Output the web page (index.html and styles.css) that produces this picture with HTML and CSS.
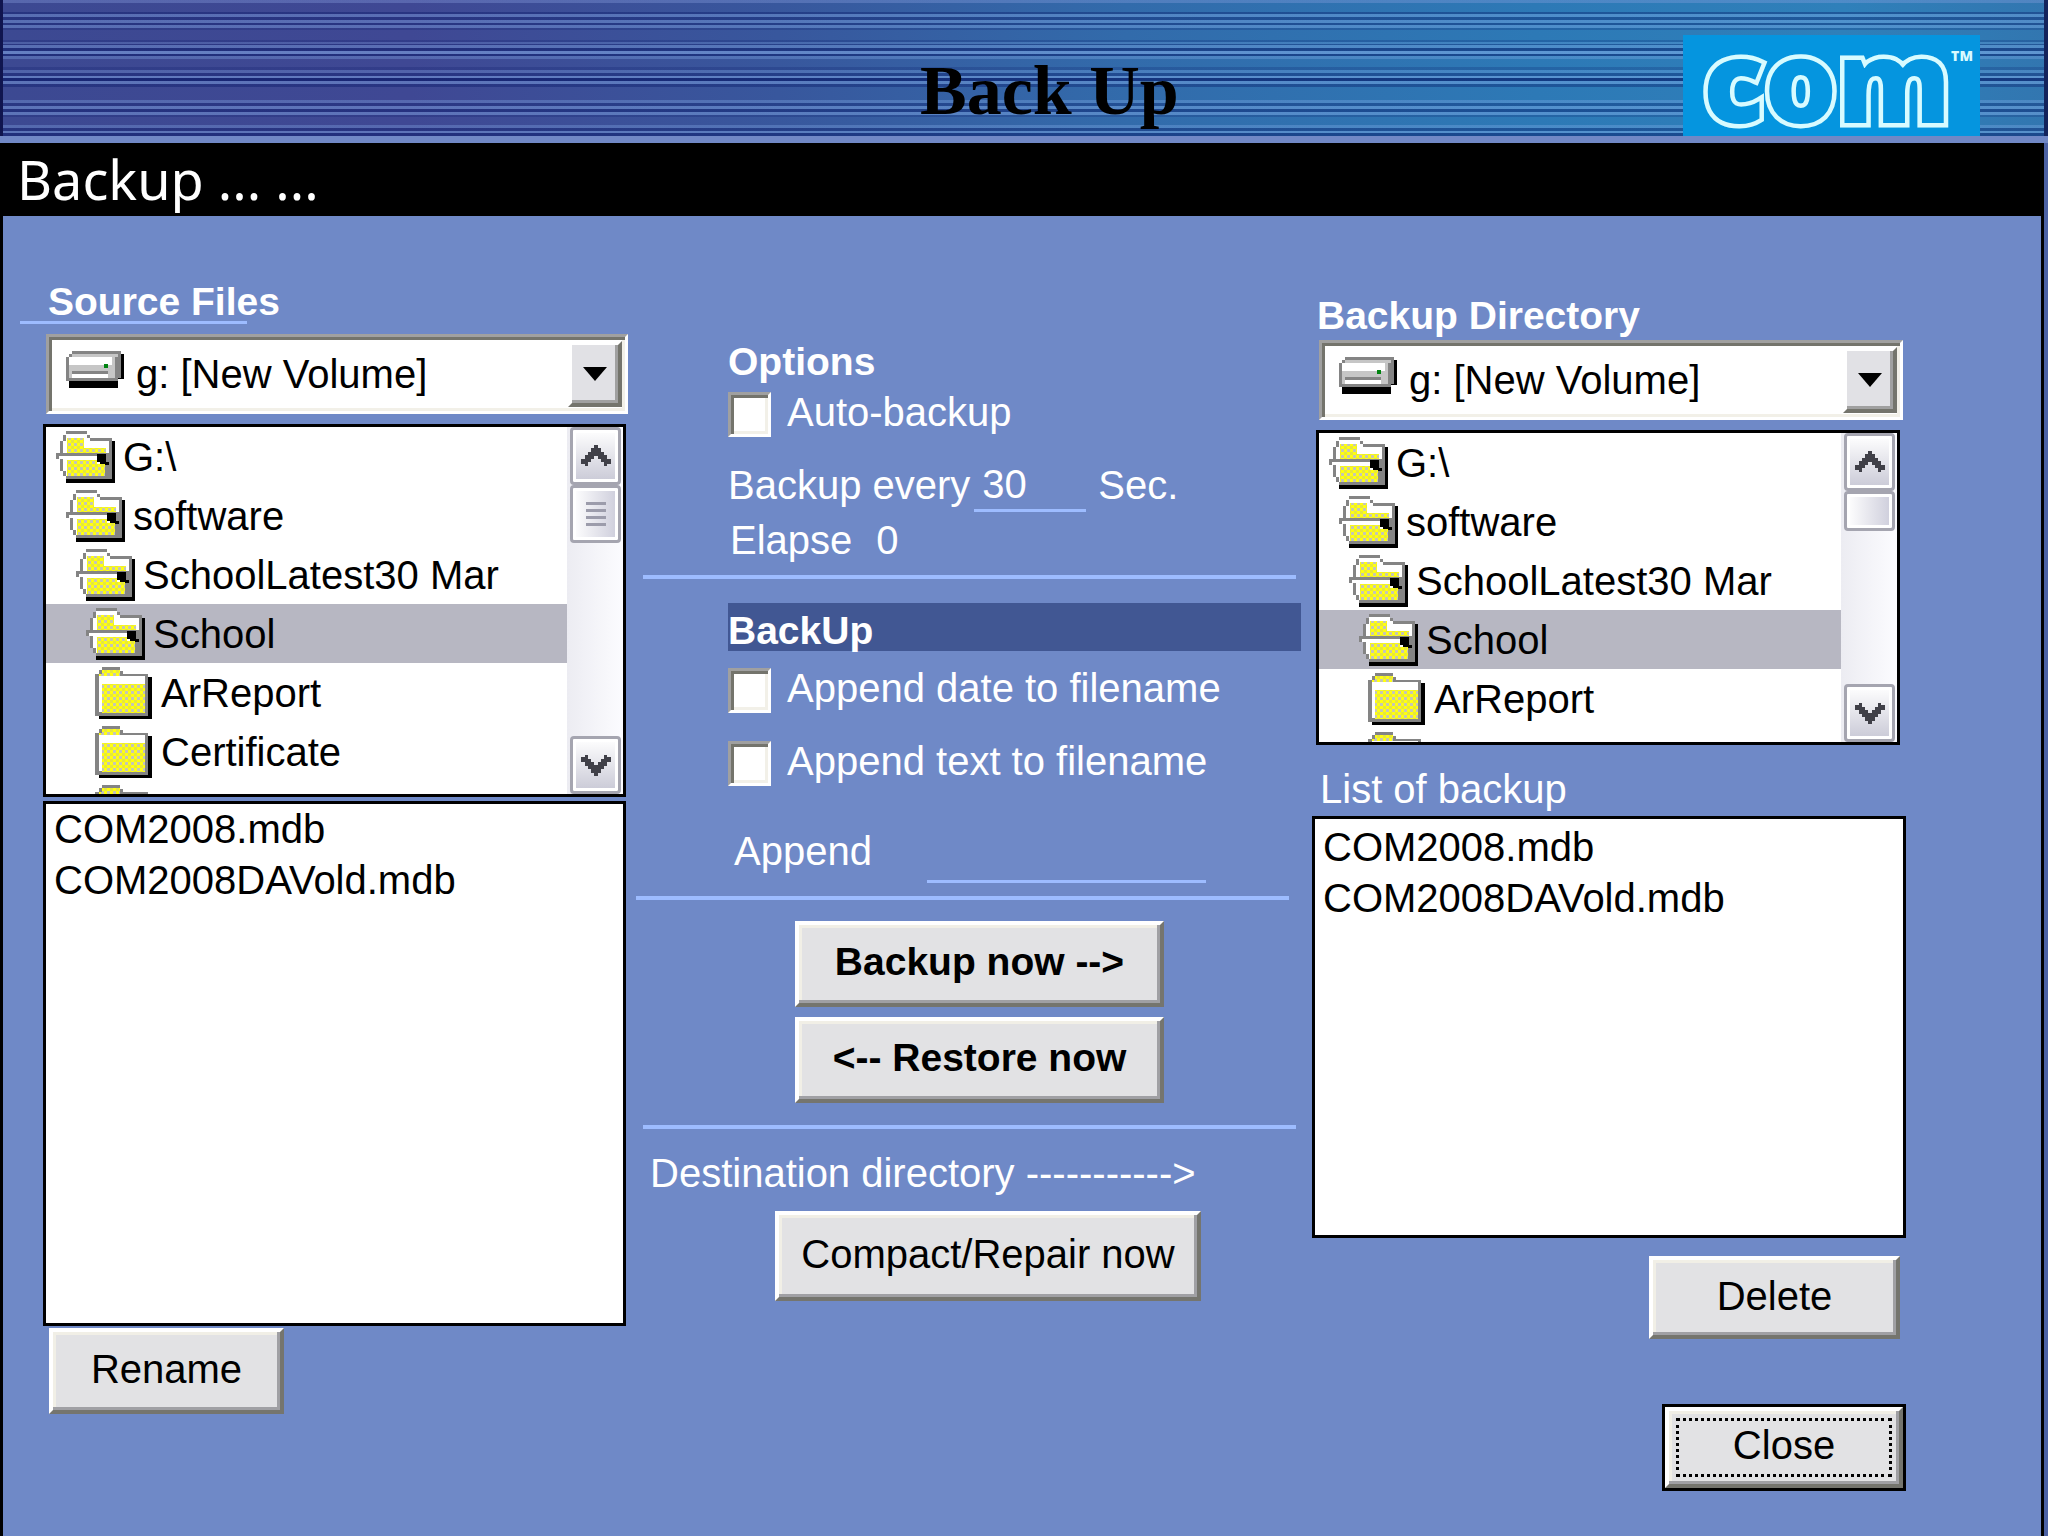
FILE: index.html
```html
<!DOCTYPE html>
<html lang="en">
<head>
    <meta charset="UTF-8">
    <meta name="viewport" content="width=device-width, initial-scale=1.0">
    <title>Back Up</title>
    <link rel="stylesheet" href="styles.css">
</head>
<body>
    <!-- Shared icons -->
    <svg class="sprite" aria-hidden="true">
        <defs>
            <pattern id="dots" width="6" height="6" patternUnits="userSpaceOnUse">
                <rect width="6" height="6" fill="#ffff10"/>
                <rect width="3" height="3" fill="#c6c6b4"/>
                <rect x="3" y="3" width="3" height="3" fill="#e6e640"/>
            </pattern>
            <symbol id="folder-open" viewBox="0 0 60 52">
                <path d="M10 48V52H59V10H56V48z" fill="#000"/>
                <path d="M10 0H31V4H34V7H56V48H10V45H7V40H4V28H0V22H4V10H7V4H10z" fill="#848484"/>
                <path d="M10 3H31V7H34V10H53V22H7V10H10z" fill="#fff"/>
                <path d="M11 7H28V17H50V22H11z" fill="url(#dots)"/>
                <path d="M3 25H41V28H47V45H10V40H7V28H3z" fill="#fff"/>
                <path d="M11 29H41V33H49V45H11z" fill="url(#dots)"/>
                <path d="M41 23H50V31H53V45H49V33H44V31H41z" fill="#000"/>
                <path d="M49 34H53V45H49z" fill="#848484"/>
            </symbol>
            <symbol id="folder" viewBox="0 0 57 52">
                <path d="M4 48V52H57V10H53V48z" fill="#000"/>
                <path d="M7 0H25V4H28V7H53V49H0V7H4V3H7z" fill="#848484"/>
                <path d="M7 3H25V9H50V45H4V8H7z" fill="#fff"/>
                <path d="M7 3H25V9H4V7H7z" fill="url(#dots)"/>
                <path d="M7 17H50V46H7z" fill="url(#dots)"/>
            </symbol>
            <symbol id="drive" viewBox="0 0 59 38">
                <path d="M3 30V37H52V28H58V3H55V26H50V30z" fill="#000"/>
                <path d="M6 0H55V27H52V30H0V6H3V3H6z" fill="#848484"/>
                <path d="M6 3H52V6H49V27H3V6H6z" fill="#c6c6c6"/>
                <path d="M3 6H46V14H3zM6 23H42V27H6z" fill="#fff"/>
                <path d="M6 20H42V23H6z" fill="#848484"/>
                <path d="M38 13H42V17H38z" fill="#008410"/>
            </symbol>
            <symbol id="chevron" viewBox="0 0 30 22">
                <path d="M13 0H17V3H20V7H23V10H26V14H30V19H26V21H23V17H20V14H17V11H13V14H10V17H7V21H4V19H0V14H4V10H7V7H10V3H13z" fill="#404048"/>
            </symbol>
        </defs>
    </svg>

    <div class="header">
        <h1>Back Up</h1>
        <div class="logo">com<sup>TM</sup></div>
    </div>

    <div class="window">
        <div class="title-bar">Backup ... ...</div>
        <div class="content">

            <div class="source">
                <h2 class="underlined">Source Files</h2>
                <div class="drive-box">
                    <svg class="drive-icon"><use href="#drive"/></svg>
                    <select aria-label="Source drive">
                        <option>g: [New Volume]</option>
                    </select>
                    <span class="arrow"></span>
                </div>
                <div class="folder-box tall">
                    <ul>
                        <li><svg class="open"><use href="#folder-open"/></svg>G:\</li>
                        <li class="level1"><svg class="open"><use href="#folder-open"/></svg>software</li>
                        <li class="level2"><svg class="open"><use href="#folder-open"/></svg>SchoolLatest30 Mar</li>
                        <li class="level3 selected"><svg class="open"><use href="#folder-open"/></svg>School</li>
                        <li class="level4"><svg class="closed"><use href="#folder"/></svg>ArReport</li>
                        <li class="level4"><svg class="closed"><use href="#folder"/></svg>Certificate</li>
                        <li class="level4"><svg class="closed"><use href="#folder"/></svg></li>
                    </ul>
                    <div class="scrollbar">
                        <button type="button" aria-label="Scroll up"><svg><use href="#chevron"/></svg></button>
                        <div class="thumb grip"><i></i><i></i><i></i><i></i></div>
                        <button type="button" class="down" aria-label="Scroll down"><svg><use href="#chevron"/></svg></button>
                    </div>
                </div>
                <select class="file-list source-list" size="8" aria-label="Source files">
                    <option>COM2008.mdb</option>
                    <option>COM2008DAVold.mdb</option>
                </select>
                <button type="button" class="btn rename">Rename</button>
            </div>

            <div class="options">
                <h2 class="indent">Options</h2>
                <label class="check indent auto"><input type="checkbox"> Auto-backup</label>
                <div class="every indent">
                    <label for="seconds">Backup every</label>
                    <input type="text" id="seconds" value="30">
                    <span>Sec.</span>
                </div>
                <div class="elapse indent"><span>Elapse</span><output>0</output></div>
                <hr>
                <h2 class="band">BackUp</h2>
                <label class="check indent date"><input type="checkbox"> Append date to filename</label>
                <label class="check indent text"><input type="checkbox"> Append text to filename</label>
                <div class="append indent">
                    <label for="append">Append</label>
                    <input type="text" id="append">
                </div>
                <hr class="shifted">
                <div class="actions">
                    <button type="button" class="btn bold">Backup now --&gt;</button>
                    <button type="button" class="btn bold">&lt;-- Restore now</button>
                </div>
                <hr class="last">
                <p class="destination">Destination directory -----------&gt;</p>
                <button type="button" class="btn compact">Compact/Repair now</button>
            </div>

            <div class="backup">
                <h2>Backup Directory</h2>
                <div class="drive-box">
                    <svg class="drive-icon"><use href="#drive"/></svg>
                    <select aria-label="Backup drive">
                        <option>g: [New Volume]</option>
                    </select>
                    <span class="arrow"></span>
                </div>
                <div class="folder-box short">
                    <ul>
                        <li><svg class="open"><use href="#folder-open"/></svg>G:\</li>
                        <li class="level1"><svg class="open"><use href="#folder-open"/></svg>software</li>
                        <li class="level2"><svg class="open"><use href="#folder-open"/></svg>SchoolLatest30 Mar</li>
                        <li class="level3 selected"><svg class="open"><use href="#folder-open"/></svg>School</li>
                        <li class="level4"><svg class="closed"><use href="#folder"/></svg>ArReport</li>
                        <li class="level4"><svg class="closed"><use href="#folder"/></svg></li>
                    </ul>
                    <div class="scrollbar">
                        <button type="button" aria-label="Scroll up"><svg><use href="#chevron"/></svg></button>
                        <div class="thumb small"></div>
                        <button type="button" class="down" aria-label="Scroll down"><svg><use href="#chevron"/></svg></button>
                    </div>
                </div>
                <label class="list-label" for="backups">List of backup</label>
                <select class="file-list backup-list" id="backups" size="8">
                    <option>COM2008.mdb</option>
                    <option>COM2008DAVold.mdb</option>
                </select>
                <button type="button" class="btn delete">Delete</button>
                <button type="button" class="btn close"><span>Close</span></button>
            </div>

        </div>
    </div>
</body>
</html>
```

FILE: styles.css
```css
* {
    box-sizing: border-box;
}
body {
    margin: 0;
    min-height: 100vh;
    display: flex;
    flex-direction: column;
    font-family: "Liberation Sans", Arial, sans-serif;
    font-size: 40px;
    line-height: 40px;
    background: #6f89c7;
    color: #fff;
}
h1, h2, p, ul {
    margin: 0;
    padding: 0;
}
input, select, button {
    font: inherit;
    color: inherit;
    border-radius: 0;
    margin: 0;
}
.sprite {
    position: absolute;
    width: 0;
    height: 0;
}

/* Header */
.header {
    display: grid;
    grid-template-columns: 1fr 297px 68px;
    height: 143px;
    border-bottom: 7px solid #7188c6;
    /* fine scan lines over the blue sweep */
    background:
        linear-gradient(to right, #10154f 3px, transparent 3px calc(100% - 4px), #14245c calc(100% - 4px)),
        linear-gradient(to bottom,
            #8aa0e059 0 3px, transparent 3px 12px,
            #00106059 12px 14px, #8cb4f059 14px 17px, #00106059 17px 20px, #8cb4f059 20px 23px,
            #00106059 23px 25px, #8cb4f059 25px 28px, #00106033 28px 30px, transparent 30px 40px,
            #00106033 40px 42px, #8cb4f033 42px 44px, #0010604d 44px 45px, #8cb4f059 45px 48px,
            #00106073 48px 51px, #8cb4f080 51px 54px, #00106073 54px 56px, #8cb4f04d 56px 59px,
            transparent 59px 67px, #00106033 67px 70px, #8cb4f040 70px 73px, #00106059 73px 76px,
            #8cb4f073 76px 78px, #00106099 78px 81px, #8cb4f066 81px 84px, #00106059 84px 87px,
            transparent 87px 100px, #8cb4f04d 100px 103px, #0010604d 103px 106px, #8cb4f066 106px 109px,
            #00106066 109px 112px, #8cb4f066 112px 115px, #00106033 115px 117px, transparent 117px 125px,
            #8cb4f04d 125px 128px, #00106059 128px 131px, #8cb4f066 131px 133px, #00106073 133px 136px),
        linear-gradient(to right, #3c4992 0%, #3f4894 20%, #38579d 38%, #326bab 55%, #2d79b6 75%, #2f80ba 90%, #3276b0 100%);
}
.header h1 {
    padding: 56px 0 0 920px;
    font: bold 70px/70px "Liberation Serif", "Times New Roman", serif;
    color: #000;
    white-space: nowrap;
}
.logo {
    display: flex;
    margin-top: 35px;
    padding-left: 20px;
    background: #0595df;
    color: #0595df;
    font-family: "Open Sans", "Liberation Sans", sans-serif;
    font-size: 114px;
    font-weight: 800;
    line-height: 88px;
    -webkit-text-stroke: 9px #d8fbff;
    paint-order: stroke fill;
}
.logo sup {
    margin-top: 13px;
    font-size: 14px;
    line-height: 15px;
    color: #d8fbff;
    -webkit-text-stroke: 0;
}

/* Window */
.window {
    flex: 1;
    display: flex;
    flex-direction: column;
    border-left: 3px solid #000;
    border-right: 4px solid #4c62a4;
}
.title-bar {
    height: 73px;
    padding-left: 14px;
    background: #000;
    font: 54px/73px "Noto Sans", Tahoma, sans-serif;
}
.content {
    flex: 1;
    display: grid;
    grid-template-columns: 585fr 662fr 594fr;
    gap: 11px;
    align-items: start;
    padding: 0 135px 40px 40px;
    border-right: 3px solid #000;
}
.source, .options, .backup {
    display: flex;
    flex-direction: column;
    min-width: 0;
}
.source {
    padding-top: 67px;
}
.options {
    padding-top: 127px;
}
.backup {
    padding-top: 81px;
}
h2 {
    font-size: 39px;
    line-height: 38px;
}
.source h2 {
    width: 227px;
    margin: 0 0 10px -23px;
    padding-left: 28px;
    border-bottom: 3px solid #9dbcff;
    white-space: nowrap;
}
.backup h2 {
    margin-bottom: 5px;
    padding-left: 5px;
}

/* Drive drop-down */
.drive-box {
    display: flex;
    align-items: center;
    height: 80px;
    margin: 0 0 10px 3px;
    padding-left: 12px;
    background: #fff;
    border: 3px solid;
    border-color: #a0a0a0 #fff #fff #a0a0a0;
    box-shadow: inset 3px 3px #74746c, inset -3px -3px #f2f0e8;
    color: #000;
}
.backup .drive-box {
    margin-left: 7px;
    margin-right: 3px;
}
.drive-icon {
    width: 59px;
    height: 38px;
    margin: 0 7px 8px 5px;
}
.drive-box select {
    flex: 1;
    height: 60px;
    line-height: 56px;
    appearance: none;
    border: 0;
    padding: 0 0 0 4px;
    background: none;
}
.arrow {
    display: flex;
    align-items: center;
    justify-content: center;
    align-self: stretch;
    width: 54px;
    margin: 4px 3px;
    background: #e1e1e5;
    border: 4px solid;
    border-color: #fff #74746c #74746c #fff;
    box-shadow: inset -3px -3px #a0a0a0;
}
.arrow::before {
    content: "";
    border: 12px solid transparent;
    border-top: 14px solid #000;
    border-bottom: 0;
}

/* Folder tree */
.folder-box {
    display: flex;
    overflow: hidden;
    border: 3px solid #000;
    background: #fff;
    color: #000;
}
.tall {
    height: 373px;
    margin: 0 2px 4px 0;
}
.short {
    height: 315px;
    margin: 0 6px 24px 4px;
}
.folder-box ul {
    flex: 1;
    list-style: none;
}
.folder-box li {
    display: flex;
    align-items: center;
    height: 59px;
    padding-left: 10px;
    white-space: nowrap;
}
.folder-box li.level1 {
    padding-left: 20px;
}
.folder-box li.level2 {
    padding-left: 30px;
}
.folder-box li.level3 {
    padding-left: 40px;
}
.folder-box li.level4 {
    padding-left: 49px;
}
.folder-box li.selected {
    background: #b7b7c2;
}
.open {
    width: 60px;
    height: 52px;
    margin-right: 7px;
}
.closed {
    width: 57px;
    height: 52px;
    margin-right: 9px;
}
.scrollbar {
    display: flex;
    flex-direction: column;
    width: 56px;
    padding: 0 2px 0 3px;
    background: linear-gradient(to right, #ececf2, #fcfcff);
}
.scrollbar button, .thumb {
    display: flex;
    align-items: center;
    justify-content: center;
    height: 58px;
    padding: 0;
    background: linear-gradient(#fff, #c9c9d6);
    border: 3px solid #a5a5b0;
    border-radius: 4px;
    box-shadow: inset 0 0 0 3px #fff;
}
.scrollbar svg {
    width: 30px;
    height: 22px;
}
.scrollbar .thumb {
    flex-direction: column;
    gap: 4px;
    background: linear-gradient(to right, #fff, #cdcddb);
}
.scrollbar .small {
    height: 40px;
}
.thumb i {
    width: 20px;
    height: 3px;
    background: #9c9cab;
}
.scrollbar .down {
    margin-top: auto;
}
.down svg {
    transform: rotate(180deg);
}

/* File lists */
.file-list {
    appearance: none;
    overflow: hidden;
    padding: 0;
    border: 3px solid #000;
    background: #fff;
    color: #000;
}
.file-list option {
    padding: 3px 8px;
}
.source-list {
    height: 525px;
    margin: 0 2px 2px 0;
}
.backup-list {
    height: 422px;
    margin-bottom: 18px;
    padding-top: 3px;
}
.list-label {
    margin: 0 0 7px 8px;
}

/* Buttons */
.btn {
    padding: 0 0 4px;
    background: #e2e2e4;
    color: #000;
    border: 4px solid;
    border-color: #fff #75756e #75756e #fff;
    box-shadow: inset -3px -3px #a0a0a4, inset 3px 3px #f1efe6;
}
.bold {
    height: 86px;
    font-size: 39px;
    font-weight: bold;
}
.rename {
    width: 235px;
    height: 86px;
    margin-left: 6px;
}
.compact {
    width: 426px;
    height: 90px;
    margin: 18px 0 0 136px;
}
.delete {
    width: 251px;
    height: 83px;
    margin: 0 6px 65px auto;
}
.close {
    display: flex;
    width: 244px;
    height: 87px;
    margin-left: auto;
    padding: 7px;
    outline: 3px solid #000;
    outline-offset: -3px;
    border-width: 7px;
    border-color: #fff #75756e #75756e #fff;
}
.close span {
    flex: 1;
    border: 3px dotted #000;
    line-height: 48px;
}

/* Options column */
.indent {
    margin-left: 89px;
}
.check {
    display: flex;
    gap: 16px;
    height: 45px;
    white-space: nowrap;
}
.check input {
    appearance: none;
    width: 43px;
    height: 45px;
    background: #fff;
    border: 3px solid;
    border-color: #a0a0a0 #fff #fff #a0a0a0;
    box-shadow: inset 3px 3px #74746c, inset -3px -3px #f2f0e8;
}
.auto {
    margin-top: 11px;
}
.date {
    margin-top: 17px;
}
.text {
    margin-top: 28px;
}
.every {
    display: flex;
    margin-top: 28px;
    white-space: nowrap;
}
.every input, .append input {
    appearance: none;
    background: none;
    border: 0;
    border-bottom: 3px solid #9dbcff;
}
.every input {
    width: 112px;
    height: 47px;
    margin: 0 12px 0 4px;
    padding: 0 8px 6px;
}
.elapse {
    display: flex;
    gap: 24px;
    margin-top: 8px;
    padding-left: 2px;
}
hr {
    width: 653px;
    height: 4px;
    margin: 15px 0 24px 4px;
    border: 0;
    background: #9dbcff;
}
hr.shifted {
    margin: 13px 0 21px -3px;
}
hr.last {
    margin-top: 22px;
}
.band {
    height: 48px;
    margin-left: 89px;
    padding-top: 9px;
    background: #415793;
}
.append {
    display: flex;
    justify-content: space-between;
    height: 52px;
    margin-top: 45px;
    margin-right: 95px;
    padding-left: 6px;
}
.append input {
    width: 279px;
}
.actions {
    display: flex;
    flex-direction: column;
    gap: 10px;
    width: 369px;
    margin-left: 156px;
}
.destination {
    padding-left: 11px;
    white-space: nowrap;
}
```
